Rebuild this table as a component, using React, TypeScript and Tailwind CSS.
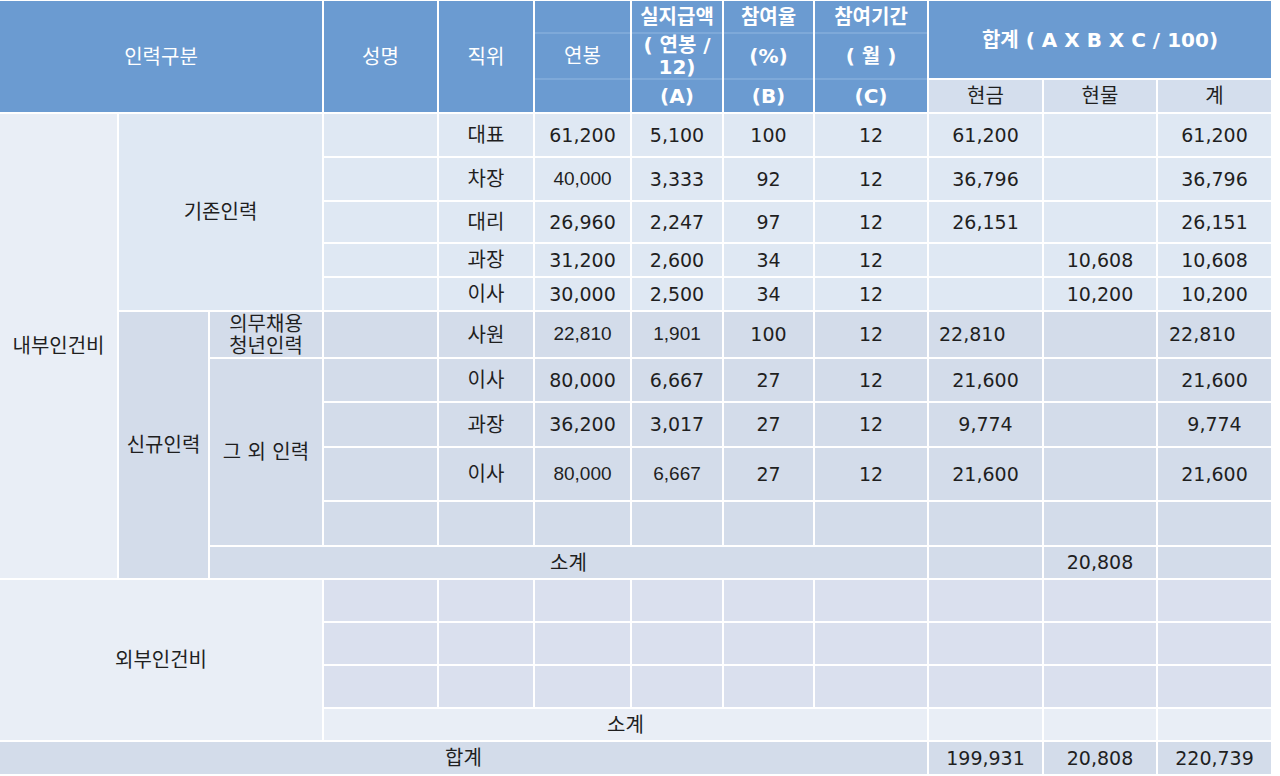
import React from 'react';

type Row = {
  pos: string;
  pay: string;
  monthly: string;
  rate: string;
  months: string;
  cash: string;
  goods: string;
  sum: string;
  arialPay?: boolean;
  arialMonthly?: boolean;
  leftTotals?: boolean;
};

const internalRows: Row[] = [
  { pos: '대표', pay: '61,200', monthly: '5,100', rate: '100', months: '12', cash: '61,200', goods: '', sum: '61,200' },
  { pos: '차장', pay: '40,000', monthly: '3,333', rate: '92', months: '12', cash: '36,796', goods: '', sum: '36,796', arialPay: true },
  { pos: '대리', pay: '26,960', monthly: '2,247', rate: '97', months: '12', cash: '26,151', goods: '', sum: '26,151' },
  { pos: '과장', pay: '31,200', monthly: '2,600', rate: '34', months: '12', cash: '', goods: '10,608', sum: '10,608' },
  { pos: '이사', pay: '30,000', monthly: '2,500', rate: '34', months: '12', cash: '', goods: '10,200', sum: '10,200' },
  { pos: '사원', pay: '22,810', monthly: '1,901', rate: '100', months: '12', cash: '22,810', goods: '', sum: '22,810', arialPay: true, arialMonthly: true, leftTotals: true },
  { pos: '이사', pay: '80,000', monthly: '6,667', rate: '27', months: '12', cash: '21,600', goods: '', sum: '21,600' },
  { pos: '과장', pay: '36,200', monthly: '3,017', rate: '27', months: '12', cash: '9,774', goods: '', sum: '9,774' },
  { pos: '이사', pay: '80,000', monthly: '6,667', rate: '27', months: '12', cash: '21,600', goods: '', sum: '21,600', arialPay: true, arialMonthly: true },
  { pos: '', pay: '', monthly: '', rate: '', months: '', cash: '', goods: '', sum: '' },
];

// grid row index for each internal data row (header takes rows 1-3)
const rowStart = [
  'row-start-4', 'row-start-5', 'row-start-6', 'row-start-7', 'row-start-8',
  'row-start-9', 'row-start-10', 'row-start-11', 'row-start-12', 'row-start-13',
];

const kor = "font-['DejaVu_Sans','Noto_Sans_CJK_KR',sans-serif]";
const arial = "font-['Liberation_Sans','Noto_Sans_CJK_KR',sans-serif]";

function Cell({ className = '', children }: { className?: string; children?: React.ReactNode }) {
  return <div className={`flex items-center justify-center ${className}`}>{children}</div>;
}

// header column split into 3 stacked parts with faint dividers
function HeadStack({ col, top, mid, bottom }: { col: string; top?: React.ReactNode; mid?: React.ReactNode; bottom?: React.ReactNode }) {
  return (
    <div className={`${col} row-start-1 row-span-3 flex flex-col bg-[#6b9bd1] text-white font-bold`}>
      <div className="h-[31px] flex items-center justify-center">{top}</div>
      <div className="h-[46px] border-t-2 border-[#7ea9d9] flex flex-col items-center justify-center leading-[22px]">{mid}</div>
      <div className="h-[34px] border-t-2 border-[#7ea9d9] flex items-center justify-center">{bottom}</div>
    </div>
  );
}

export default function App() {
  return (
    <div className={`w-[1280px] h-[776px] bg-white ${kor} text-[20px] text-[#1f1f1f]`}>
      <div className="grid w-[1271px] gap-[2px] pt-[1px] grid-cols-[117px_89px_112px_113px_94px_95px_90px_89px_112px_113px_112px_113px] grid-rows-[31px_44px_32px_42px_42px_40px_32px_32px_45px_42px_43px_52px_43px_31px_41px_41px_41px_31px_32px]">
        {/* header */}
        <Cell className="col-start-1 col-span-3 row-start-1 row-span-3 bg-[#6b9bd1] text-white">인력구분</Cell>
        <Cell className="col-start-4 row-start-1 row-span-3 bg-[#6b9bd1] text-white">성명</Cell>
        <Cell className="col-start-5 row-start-1 row-span-3 bg-[#6b9bd1] text-white">직위</Cell>
        <div className="col-start-6 row-start-1 row-span-3 flex flex-col bg-[#6b9bd1] text-white">
          <div className="h-[31px]" />
          <div className="h-[46px] border-t-2 border-[#7ea9d9] flex items-center justify-center">연봉</div>
          <div className="h-[34px] border-t-2 border-[#7ea9d9]" />
        </div>
        <HeadStack
          col="col-start-7"
          top="실지급액"
          mid={<><span>( 연봉 /</span><span>12)</span></>}
          bottom="(A)"
        />
        <HeadStack col="col-start-8" top="참여율" mid="(%)" bottom="(B)" />
        <HeadStack col="col-start-9" top="참여기간" mid="( 월 )" bottom="(C)" />
        <Cell className="col-start-10 col-span-3 row-start-1 row-span-2 bg-[#6b9bd1] text-white font-bold">
          합계 ( A X B X C / 100)
        </Cell>
        <Cell className="col-start-10 row-start-3 bg-[#d4deed]">현금</Cell>
        <Cell className="col-start-11 row-start-3 bg-[#d4deed]">현물</Cell>
        <Cell className="col-start-12 row-start-3 bg-[#d4deed]">계</Cell>

        {/* 내부인건비 */}
        <Cell className="col-start-1 row-start-4 row-span-11 bg-[#e9eef6]">내부인건비</Cell>
        <Cell className="col-start-2 col-span-2 row-start-4 row-span-5 bg-[#dfe8f3]">기존인력</Cell>
        <Cell className="col-start-2 row-start-9 row-span-6 bg-[#d3dcea]">신규인력</Cell>
        <Cell className="col-start-3 row-start-9 bg-[#d3dcea] flex-col leading-[22px]">
          <span>의무채용</span>
          <span>청년인력</span>
        </Cell>
        <Cell className="col-start-3 row-start-10 row-span-4 bg-[#d3dcea]">그 외 인력</Cell>

        {internalRows.map((r, i) => {
          const rs = rowStart[i];
          const bg = i < 5 ? 'bg-[#dfe8f3]' : 'bg-[#d3dcea]';
          const num = 'text-[19px]';
          return (
            <React.Fragment key={i}>
              <Cell className={`col-start-4 ${rs} ${bg}`} />
              <Cell className={`col-start-5 ${rs} ${bg}`}>{r.pos}</Cell>
              <Cell className={`col-start-6 ${rs} ${bg} ${num} ${r.arialPay ? arial : ''}`}>{r.pay}</Cell>
              <Cell className={`col-start-7 ${rs} ${bg} ${num} ${r.arialMonthly ? arial : ''}`}>{r.monthly}</Cell>
              <Cell className={`col-start-8 ${rs} ${bg} ${num}`}>{r.rate}</Cell>
              <Cell className={`col-start-9 ${rs} ${bg} ${num}`}>{r.months}</Cell>
              <Cell className={`col-start-10 ${rs} ${bg} ${num} ${r.leftTotals ? '!justify-start pl-[10px]' : ''}`}>{r.cash}</Cell>
              <Cell className={`col-start-11 ${rs} ${bg} ${num}`}>{r.goods}</Cell>
              <Cell className={`col-start-12 ${rs} ${bg} ${num} ${r.leftTotals ? '!justify-start pl-[11px]' : ''}`}>{r.sum}</Cell>
            </React.Fragment>
          );
        })}

        <Cell className="col-start-3 col-span-7 row-start-14 bg-[#d3dcea]">소계</Cell>
        <Cell className="col-start-10 row-start-14 bg-[#d3dcea]" />
        <Cell className="col-start-11 row-start-14 bg-[#d3dcea] text-[19px]">20,808</Cell>
        <Cell className="col-start-12 row-start-14 bg-[#d3dcea]" />

        {/* 외부인건비 */}
        <Cell className="col-start-1 col-span-3 row-start-15 row-span-4 bg-[#e9eef6]">외부인건비</Cell>
        {['row-start-15', 'row-start-16', 'row-start-17'].map((rs) => (
          <React.Fragment key={rs}>
            <div className={`col-start-4 ${rs} bg-[#dae0ee]`} />
            <div className={`col-start-5 ${rs} bg-[#dae0ee]`} />
            <div className={`col-start-6 ${rs} bg-[#dae0ee]`} />
            <div className={`col-start-7 ${rs} bg-[#dae0ee]`} />
            <div className={`col-start-8 ${rs} bg-[#dae0ee]`} />
            <div className={`col-start-9 ${rs} bg-[#dae0ee]`} />
            <div className={`col-start-10 ${rs} bg-[#dae0ee]`} />
            <div className={`col-start-11 ${rs} bg-[#dae0ee]`} />
            <div className={`col-start-12 ${rs} bg-[#dae0ee]`} />
          </React.Fragment>
        ))}
        <Cell className="col-start-4 col-span-6 row-start-18 bg-[#e9eef6]">소계</Cell>
        <div className="col-start-10 row-start-18 bg-[#e9eef6]" />
        <div className="col-start-11 row-start-18 bg-[#e9eef6]" />
        <div className="col-start-12 row-start-18 bg-[#e9eef6]" />

        {/* 합계 */}
        <Cell className="col-start-1 col-span-9 row-start-19 bg-[#d3dcea]">합계</Cell>
        <Cell className="col-start-10 row-start-19 bg-[#d3dcea] text-[19px]">199,931</Cell>
        <Cell className="col-start-11 row-start-19 bg-[#d3dcea] text-[19px]">20,808</Cell>
        <Cell className="col-start-12 row-start-19 bg-[#d3dcea] text-[19px]">220,739</Cell>
      </div>
    </div>
  );
}
